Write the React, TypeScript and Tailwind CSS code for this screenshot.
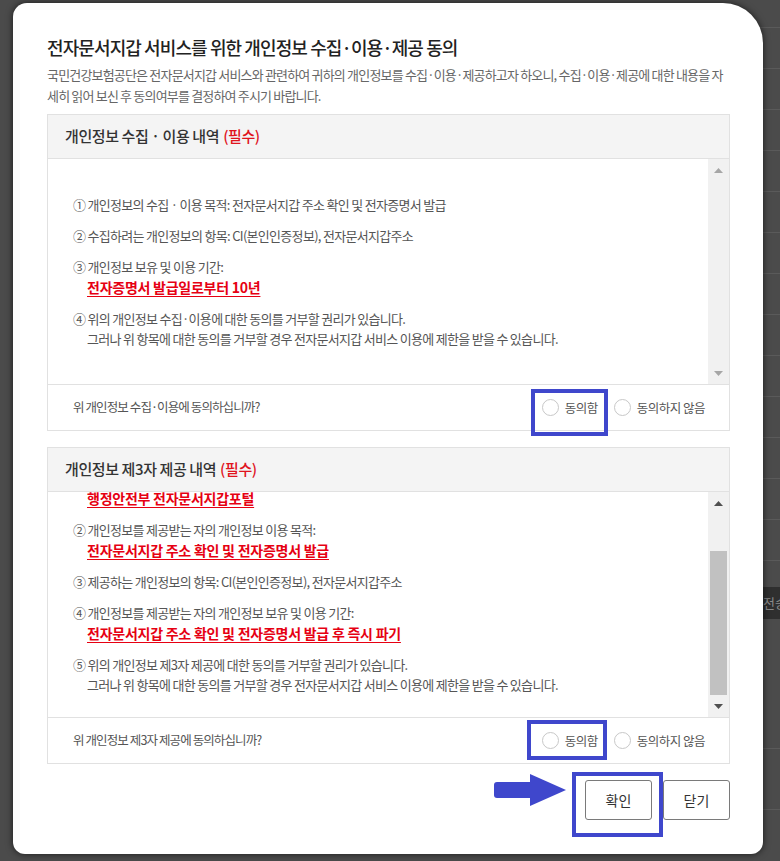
import React from "react";

const font = "font-['Noto_Sans_CJK_KR','Noto_Sans',sans-serif]";
const body = "text-[13px] tracking-[-0.7px] text-[#555]";
const small = "text-[12.5px] tracking-[-0.9px] text-[#555]";

function Tri({ up, color }: { up?: boolean; color: string }) {
  return (
    <svg width="9" height="5" viewBox="0 0 9 5">
      <polygon points={up ? "0,5 4.5,0 9,5" : "0,0 9,0 4.5,5"} fill={color} />
    </svg>
  );
}

function ScrollBar({ color, thumb }: { color: string; thumb?: boolean }) {
  return (
    <div className="relative flex w-[21px] flex-col bg-[#f1f1f1]">
      <div className="flex h-[22px] justify-center pt-[9px]">
        <Tri up color={color} />
      </div>
      <div className="flex-1" />
      <div className="flex h-[22px] items-end justify-center pb-[8px]">
        <Tri color={color} />
      </div>
      {thumb && <div className="absolute left-[2px] right-[2px] top-[59px] h-[144px] bg-[#c1c1c1]" />}
    </div>
  );
}

function L({ children, indent }: { children: React.ReactNode; indent?: boolean }) {
  return (
    <div className={`h-[20px] whitespace-nowrap leading-[20px] ${indent ? "pl-[14px]" : ""}`}>{children}</div>
  );
}

function Red({ children }: { children: React.ReactNode }) {
  return (
    <div className="h-[21px] whitespace-nowrap pl-[14px] text-[14px] font-bold leading-[21px] tracking-[-0.25px] text-[#e60012] underline underline-offset-[3px]">
      {children}
    </div>
  );
}

function Item({ children }: { children: React.ReactNode }) {
  return <div className="mb-[11px]">{children}</div>;
}

function Radio({ label }: { label: string }) {
  return (
    <div className="flex items-center gap-[6px]">
      <span className="h-[17px] w-[17px] rounded-full border border-[#c8c8c8] bg-white" />
      <span className="leading-[20px] tracking-[-0.5px]">{label}</span>
    </div>
  );
}

function Section({
  title,
  question,
  children,
  arrow,
  thumb,
}: {
  title: string;
  question: string;
  children: React.ReactNode;
  arrow: string;
  thumb?: boolean;
}) {
  return (
    <div className="border border-[#e1e1e1]">
      <div className="flex h-[44px] items-center border-b border-[#e1e1e1] bg-[#f4f4f4] pl-[17px] text-[15px] font-medium tracking-[-0.4px] text-[#333]">
        {title}
        <span className="ml-[4px] text-[#e0141e]">(필수)</span>
      </div>
      <div className="flex h-[226px] border-b border-[#e1e1e1]">
        <div className={`flex-1 overflow-hidden pl-[25px] ${body}`}>{children}</div>
        <ScrollBar color={arrow} thumb={thumb} />
      </div>
      <div className={`flex h-[45px] items-center justify-between pl-[25px] pr-[24px] ${small}`}>
        <span className="whitespace-nowrap">{question}</span>
        <div className="flex items-center gap-[16px]">
          <Radio label="동의함" />
          <Radio label="동의하지 않음" />
        </div>
      </div>
    </div>
  );
}

export default function App() {
  const rows = Array.from({ length: 13 });
  return (
    <div className={`relative h-[861px] w-[780px] overflow-hidden bg-[#4b4b4b] ${font}`}>
      {/* page behind the dialog */}
      <div className="flex h-full justify-end">
        <div className="flex w-[40px] flex-col">
          <div className="h-[28px] border-b border-[#5a5a5a]" />
          {rows.map((_, i) => (
            <div key={i} className="h-[41px] border-b border-[#5a5a5a]" />
          ))}
          <div className="mt-[26px] flex h-[32px] items-center bg-[#2f2f2f] pl-[23px] text-[13px] text-[#8a8a8a] whitespace-nowrap">
            전송
          </div>
          <div className="h-[130px] border-b border-[#5a5a5a]" />
          <div className="h-[61px] border-b border-[#5a5a5a]" />
        </div>
      </div>

      {/* dialog */}
      <div className="absolute left-[13px] top-[3px] flex h-[851px] w-[750px] flex-col rounded-b-[12px] rounded-tl-[14px] rounded-tr-[40px] bg-white pl-[34px] pr-[33px] pt-[31px] shadow-[0_0_7px_rgba(0,0,0,0.65)]">
        <h1 className="h-[26px] whitespace-nowrap text-[18px] font-medium leading-[26px] tracking-[-0.9px] text-[#222]">
          전자문서지갑 서비스를 위한 개인정보 수집·이용·제공 동의
        </h1>
        <p className="mt-[4px] whitespace-nowrap text-[13px] leading-[21px] tracking-[-0.82px] text-[#666]">
          국민건강보험공단은 전자문서지갑 서비스와 관련하여 귀하의 개인정보를 수집·이용·제공하고자 하오니, 수집·이용·제공에 대한 내용을 자
          <br />
          세히 읽어 보신 후 동의여부를 결정하여 주시기 바랍니다.
        </p>

        <div className="mt-[8px]">
          <Section
            title="개인정보 수집 · 이용 내역"
            question="위 개인정보 수집·이용에 동의하십니까?"
            arrow="#a6a6a6"
          >
            <div className="pt-[36px]">
              <Item>
                <L>① 개인정보의 수집 · 이용 목적: 전자문서지갑 주소 확인 및 전자증명서 발급</L>
              </Item>
              <Item>
                <L>② 수집하려는 개인정보의 항목: CI(본인인증정보), 전자문서지갑주소</L>
              </Item>
              <Item>
                <L>③ 개인정보 보유 및 이용 기간:</L>
                <Red>전자증명서 발급일로부터 10년</Red>
              </Item>
              <Item>
                <L>④ 위의 개인정보 수집·이용에 대한 동의를 거부할 권리가 있습니다.</L>
                <L indent>그러나 위 항목에 대한 동의를 거부할 경우 전자문서지갑 서비스 이용에 제한을 받을 수 있습니다.</L>
              </Item>
            </div>
          </Section>
        </div>

        <div className="mt-[16px]">
          <Section
            title="개인정보 제3자 제공 내역"
            question="위 개인정보 제3자 제공에 동의하십니까?"
            arrow="#505050"
            thumb
          >
            <div className="-mt-[24px]">
              <Item>
                <L>① 개인정보를 제공받는 자:</L>
                <Red>행정안전부 전자문서지갑포털</Red>
              </Item>
              <Item>
                <L>② 개인정보를 제공받는 자의 개인정보 이용 목적:</L>
                <Red>전자문서지갑 주소 확인 및 전자증명서 발급</Red>
              </Item>
              <Item>
                <L>③ 제공하는 개인정보의 항목: CI(본인인증정보), 전자문서지갑주소</L>
              </Item>
              <Item>
                <L>④ 개인정보를 제공받는 자의 개인정보 보유 및 이용 기간:</L>
                <Red>전자문서지갑 주소 확인 및 전자증명서 발급 후 즉시 파기</Red>
              </Item>
              <Item>
                <L>⑤ 위의 개인정보 제3자 제공에 대한 동의를 거부할 권리가 있습니다.</L>
                <L indent>그러나 위 항목에 대한 동의를 거부할 경우 전자문서지갑 서비스 이용에 제한을 받을 수 있습니다.</L>
              </Item>
            </div>
          </Section>
        </div>

        <div className="mt-[16px] flex justify-end gap-[11px]">
          <button className="h-[40px] w-[67px] rounded-[3px] border border-[#7a7a7a] bg-white text-[14px] text-[#333]">
            확인
          </button>
          <button className="h-[40px] w-[67px] rounded-[3px] border border-[#7a7a7a] bg-white text-[14px] text-[#333]">
            닫기
          </button>
        </div>

        {/* blue annotation overlays */}
        <div className="pointer-events-none absolute left-[518px] top-[386px] h-[47px] w-[77px] border-[4px] border-[#3f47cc]" />
        <div className="pointer-events-none absolute left-[514px] top-[717px] h-[40px] w-[80px] border-[4px] border-[#3f47cc]" />
        <div className="pointer-events-none absolute left-[559px] top-[769px] h-[65px] w-[91px] border-[4px] border-[#3f47cc]" />
        <svg className="pointer-events-none absolute left-[481px] top-[771px]" width="72" height="32" viewBox="0 0 72 32">
          <rect x="0" y="8" width="40" height="16" rx="3" fill="#3f47cc" />
          <polygon points="36,0 72,16 36,32" fill="#3f47cc" />
        </svg>
      </div>
    </div>
  );
}
